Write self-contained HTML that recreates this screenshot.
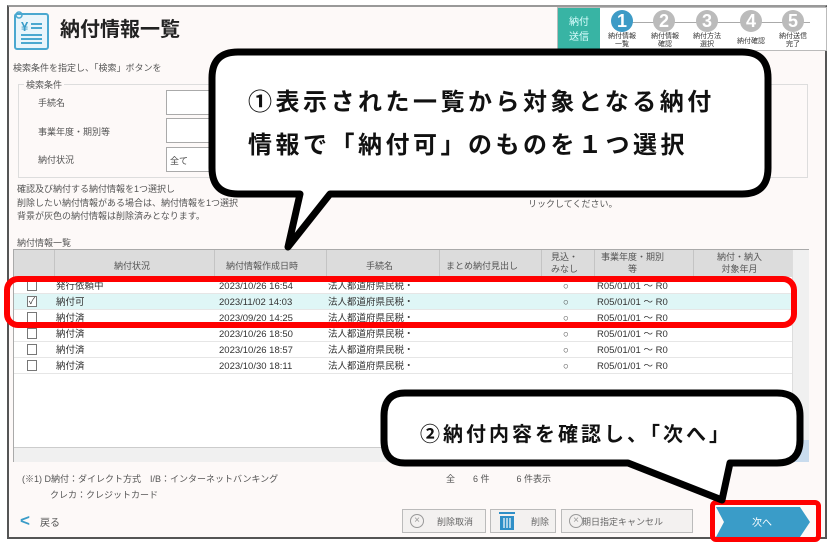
<!DOCTYPE html>
<html><head><meta charset="utf-8"><style>
*{margin:0;padding:0;box-sizing:border-box}
body{width:834px;height:548px;background:#fff;font-family:"Liberation Sans","Noto Sans CJK JP",sans-serif;position:relative;overflow:hidden;color:#444}
.a{position:absolute}
.s{font-size:9px;color:#555;white-space:nowrap}
.win{left:7px;top:5px;width:820px;height:534px;border:2px solid #555;border-top-color:#999;background:#fdf9f8}
.inp{left:166px;width:60px;height:25px;border:1px solid #aaa;background:#fff}
.tbl{left:13px;top:249px;width:796px;height:213px;border:1px solid #aaa;background:#fff}
.hd{left:0;top:0;width:778px;height:27px;background:#dcdcdc}
.vl{top:0;width:1px;height:27px;background:#c4c4c4}
.row{left:0;width:778px;height:16px;border-bottom:1px solid #e6e6e6;font-size:9.5px;color:#333}
.row span{position:absolute;top:2px;white-space:nowrap;line-height:13px;height:13px}
.cb{position:absolute;left:13px;top:2px;width:10px;height:11px;border:1px solid #777;background:#fff}
.btn{top:509px;height:24px;border:1px solid #bbb;background:#f3f1f0;font-size:9px;color:#666}
</style></head><body>
<div class="a win"></div>
<svg class="a" style="left:13px;top:11px" width="38" height="40" viewBox="0 0 38 40"><rect x="2" y="3" width="33" height="35" rx="2" fill="#e9f5fb" stroke="#4aa8d0" stroke-width="2"/><circle cx="6" cy="4" r="3" fill="none" stroke="#4aa8d0" stroke-width="1.5"/><text x="8" y="20" font-size="13" font-weight="bold" fill="#3a9cc8" font-family="Liberation Sans">¥</text><path d="M18 13h11M18 17h11M8 24h21M8 28h21M8 32h21" stroke="#4aa8d0" stroke-width="2"/></svg>
<div class="a" style="left:60px;top:13px;font-size:20px;font-weight:bold;color:#222">納付情報一覧</div>
<div class="a" style="left:557px;top:7px;width:270px;height:44px;border:1px solid #bbb;background:#fff"></div>
<div class="a" style="left:558px;top:8px;width:42px;height:42px;background:#38b4a4;color:#dff;font-size:10px;text-align:center;padding-top:7px;line-height:15px">納付<br>送信</div>
<div class="a" style="left:620px;top:22px;width:190px;height:1px;background:#aaa"></div>
<div class="a" style="left:611px;top:10px;width:22px;height:22px;border-radius:50%;background:#3d9bc6;color:#fff;font-size:18px;text-align:center;line-height:22px;font-weight:bold">1</div>
<div class="a" style="left:653px;top:10px;width:22px;height:22px;border-radius:50%;background:#bbb;color:#fff;font-size:18px;text-align:center;line-height:22px;font-weight:bold">2</div>
<div class="a" style="left:696px;top:10px;width:22px;height:22px;border-radius:50%;background:#bbb;color:#fff;font-size:18px;text-align:center;line-height:22px;font-weight:bold">3</div>
<div class="a" style="left:740px;top:10px;width:22px;height:22px;border-radius:50%;background:#bbb;color:#fff;font-size:18px;text-align:center;line-height:22px;font-weight:bold">4</div>
<div class="a" style="left:782px;top:10px;width:22px;height:22px;border-radius:50%;background:#bbb;color:#fff;font-size:18px;text-align:center;line-height:22px;font-weight:bold">5</div>
<div class="a s" style="left:602px;top:33px;font-size:7px;line-height:8px;text-align:center;width:40px;color:#333">納付情報<br>一覧</div>
<div class="a s" style="left:645px;top:33px;font-size:7px;line-height:8px;text-align:center;width:40px;color:#333">納付情報<br>確認</div>
<div class="a s" style="left:687px;top:33px;font-size:7px;line-height:8px;text-align:center;width:40px;color:#333">納付方法<br>選択</div>
<div class="a s" style="left:731px;top:36px;font-size:7px;text-align:center;width:40px;color:#333">納付確認</div>
<div class="a s" style="left:773px;top:33px;font-size:7px;line-height:8px;text-align:center;width:40px;color:#333">納付送信<br>完了</div>
<div class="a s" style="left:13px;top:61px">検索条件を指定し、「検索」ボタンを</div>
<div class="a" style="left:18px;top:84px;width:790px;height:94px;border:1px solid #ddd"></div>
<div class="a s" style="left:24px;top:78px;background:#fdf9f8;padding:0 2px">検索条件</div>
<div class="a s" style="left:38px;top:96px">手続名</div>
<div class="a s" style="left:38px;top:125px">事業年度・期別等</div>
<div class="a s" style="left:38px;top:153px">納付状況</div>
<div class="a inp" style="top:90px"></div>
<div class="a inp" style="top:118px"></div>
<div class="a inp" style="top:147px;font-size:9px;padding:6px 3px">全て</div>
<div class="a s" style="left:17px;top:182px">確認及び納付する納付情報を1つ選択し</div>
<div class="a s" style="left:17px;top:196px">削除したい納付情報がある場合は、納付情報を1つ選択</div>
<div class="a s" style="left:528px;top:197px">リックしてください。</div>
<div class="a s" style="left:17px;top:209px">背景が灰色の納付情報は削除済みとなります。</div>
<div class="a s" style="left:17px;top:236px">納付情報一覧</div>
<div class="a tbl">
 <div class="a hd"></div>
 <div class="a vl" style="left:40px"></div><div class="a vl" style="left:200px"></div><div class="a vl" style="left:312px"></div><div class="a vl" style="left:425px"></div><div class="a vl" style="left:527px"></div><div class="a vl" style="left:580px"></div><div class="a vl" style="left:679px"></div>
 <div class="a s" style="left:100px;top:9px">納付状況</div>
 <div class="a s" style="left:212px;top:9px">納付情報作成日時</div>
 <div class="a s" style="left:352px;top:9px">手続名</div>
 <div class="a s" style="left:432px;top:9px">まとめ納付見出し</div>
 <div class="a s" style="left:537px;top:1px;line-height:12px;text-align:center">見込・<br>みなし</div>
 <div class="a s" style="left:587px;top:1px;line-height:12px;text-align:center">事業年度・期別<br>等</div>
 <div class="a s" style="left:703px;top:1px;line-height:12px;text-align:center">納付・納入<br>対象年月</div>
 <div class="a" style="left:778px;top:0;width:17px;height:190px;background:#f0f0f0;border-left:1px solid #ddd"></div>
 <div class="a" style="left:0;top:197px;width:778px;height:15px;background:#f0f0f0;border-top:1px solid #ccc"></div>
 <div class="a" style="left:778px;top:190px;width:17px;height:22px;background:#c9dcee"></div>
 <div class="a row" style="top:28px"><i class="cb"></i><span style="left:42px">発行依頼中</span><span style="left:205px">2023/10/26 16:54</span><span style="left:314px">法人都道府県民税・</span><span style="left:549px">○</span><span style="left:583px">R05/01/01 ～ R0</span></div>
 <div class="a row" style="top:44px;background:#dff6f6"><i class="cb" style="font-style:normal;font-size:9px;line-height:9px;text-align:center">✓</i><span style="left:42px">納付可</span><span style="left:205px">2023/11/02 14:03</span><span style="left:314px">法人都道府県民税・</span><span style="left:549px">○</span><span style="left:583px">R05/01/01 ～ R0</span></div>
 <div class="a row" style="top:60px"><i class="cb"></i><span style="left:42px">納付済</span><span style="left:205px">2023/09/20 14:25</span><span style="left:314px">法人都道府県民税・</span><span style="left:549px">○</span><span style="left:583px">R05/01/01 ～ R0</span></div>
 <div class="a row" style="top:76px"><i class="cb"></i><span style="left:42px">納付済</span><span style="left:205px">2023/10/26 18:50</span><span style="left:314px">法人都道府県民税・</span><span style="left:549px">○</span><span style="left:583px">R05/01/01 ～ R0</span></div>
 <div class="a row" style="top:92px"><i class="cb"></i><span style="left:42px">納付済</span><span style="left:205px">2023/10/26 18:57</span><span style="left:314px">法人都道府県民税・</span><span style="left:549px">○</span><span style="left:583px">R05/01/01 ～ R0</span></div>
 <div class="a row" style="top:108px"><i class="cb"></i><span style="left:42px">納付済</span><span style="left:205px">2023/10/30 18:11</span><span style="left:314px">法人都道府県民税・</span><span style="left:549px">○</span><span style="left:583px">R05/01/01 ～ R0</span></div>
</div>
<div class="a s" style="left:22px;top:472px">(※1) D納付：ダイレクト方式　I/B：インターネットバンキング</div>
<div class="a s" style="left:50px;top:488px">クレカ：クレジットカード</div>
<div class="a s" style="left:446px;top:472px">全　　6 件　　　6 件表示</div>
<div class="a" style="left:20px;top:511px;font-size:17px;color:#3a9cc8;font-weight:bold">&lt;</div>
<div class="a s" style="left:40px;top:514px;font-size:10px">戻る</div>
<div class="a btn" style="left:402px;width:84px;padding:5px 0 0 34px">削除取消</div>
<div class="a" style="left:410px;top:514px;width:14px;height:14px;border:1.5px solid #999;border-radius:50%;font-size:10px;line-height:11px;text-align:center;color:#999">×</div>
<div class="a btn" style="left:490px;width:66px;padding:5px 0 0 40px">削除</div>
<svg class="a" style="left:499px;top:512px" width="16" height="18"><rect x="0" y="0" width="16" height="2" fill="#2f8fc7"/><rect x="1" y="4" width="14" height="14" fill="#2f8fc7"/><path d="M5 6v10M8 6v10M11 6v10" stroke="#fff" stroke-width="1.2"/></svg>
<div class="a btn" style="left:561px;width:132px;padding:5px 0 0 20px">期日指定キャンセル</div>
<div class="a" style="left:569px;top:514px;width:14px;height:14px;border:1.5px solid #999;border-radius:50%;font-size:10px;line-height:11px;text-align:center;color:#999">×</div>
<svg class="a" style="left:716px;top:507px" width="96" height="30"><polygon points="0,0 84,0 94,15 84,30 0,30 8,15" fill="#3a9cc8"/><text x="46" y="19" font-size="10" fill="#fff" text-anchor="middle" font-family="Liberation Sans,Noto Sans CJK JP">次へ</text></svg>
<div class="a" style="left:4px;top:276px;width:793px;height:52px;border:6px solid #f00;border-radius:14px"></div>
<div class="a" style="left:710px;top:500px;width:111px;height:42px;border:5px solid #f00;border-radius:6px"></div>
<svg class="a" style="left:0;top:0" width="834" height="548">
<path d="M238 52 H742 Q768 52 768 78 V168 Q768 194 742 194 H330 L288 247 L300 194 H238 Q212 194 212 168 V78 Q212 52 238 52 Z" fill="#fff" stroke="#000" stroke-width="7" stroke-linejoin="round"/>
<path d="M405 393 H777 Q800 393 800 416 V440 Q800 463 777 463 H730 L722 500 L628 463 H405 Q384 463 384 440 V416 Q384 393 405 393 Z" fill="#fff" stroke="#000" stroke-width="7" stroke-linejoin="round"/>
</svg>
<div class="a" style="left:248px;top:82px;font-size:24px;letter-spacing:3.5px;font-weight:bold;color:#111;white-space:nowrap">①表示された一覧から対象となる納付</div>
<div class="a" style="left:248px;top:125px;font-size:24px;letter-spacing:3.5px;font-weight:bold;color:#111;white-space:nowrap">情報で「納付可」のものを１つ選択</div>
<div class="a" style="left:420px;top:418px;font-size:20px;letter-spacing:3px;font-weight:bold;color:#111;white-space:nowrap">②納付内容を確認し、「次へ」</div>
</body></html>
